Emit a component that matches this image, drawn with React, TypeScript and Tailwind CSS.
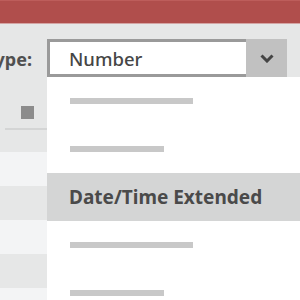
const font = { fontFamily: '"Noto Sans", "Open Sans", sans-serif' };

const rows = ["bg-[#f3f4f5]", "bg-[#e6e7e7]", "bg-[#f3f4f5]", "bg-[#e6e7e7]", "bg-[#f3f4f5]"];

const App = () => {
  return (
    <div className="w-[300px] h-[300px] overflow-hidden bg-[#e6e7e7] flex flex-col" style={font}>
      <div className="h-[24px] shrink-0 bg-[#b04e4c] border-t border-t-[#bd5d5b] border-b border-b-[#d4a5a4]" />
      <div className="flex flex-1">
        {/* left column: label + grid rows behind the popup */}
        <div className="w-[47px] shrink-0 flex flex-col">
          <div className="mt-[15px] h-[38px] flex items-center justify-end pr-[15px]">
            <span className="whitespace-nowrap text-[18px] font-bold text-[#505050] leading-none pt-[2px]">Type:</span>
          </div>
          <div className="mt-[29px] ml-[21px] w-[13px] h-[13px] bg-[#8c8c8c]" />
          <div className="mt-[9px] ml-[5px] h-[2px] bg-[#d4d5d5]" />
          <div className="h-[22px]" />
          {rows.map((c, i) => (
            <div key={i} className={`h-[34px] shrink-0 ${c}`} />
          ))}
        </div>
        {/* right column: select + open list */}
        <div className="flex-1 flex flex-col">
          <div className="mt-[15px] h-[38px] flex pr-[13px]">
            <div className="flex-1 bg-white border-[3px] border-r-0 border-[#9a9a9a] flex items-center pl-[19px]">
              <span className="text-[18.5px] font-medium text-[#464646] leading-none pt-[2px]">Number</span>
            </div>
            <div className="w-[41px] bg-[#c1c1c1] flex items-center justify-center">
              <svg width="14" height="9" viewBox="0 0 14 9" className="mt-[1px]">
                <polyline points="1.5,1.5 7,7 12.5,1.5" fill="none" stroke="#444444" strokeWidth="3" />
              </svg>
            </div>
          </div>
          <div className="flex-1 bg-white flex flex-col">
            <div className="h-[48px] flex items-center pl-[23px]">
              <div className="w-[123px] h-[6px] bg-[#c8c8c8]" />
            </div>
            <div className="h-[48px] flex items-center pl-[23px]">
              <div className="w-[94px] h-[6px] bg-[#c8c8c8]" />
            </div>
            <div className="h-[48px] flex items-center pl-[22px] bg-[#d4d5d5]">
              <span className="text-[19px] font-bold text-[#4a4a4a] whitespace-nowrap">Date/Time Extended</span>
            </div>
            <div className="h-[48px] flex items-center pl-[23px]">
              <div className="w-[123px] h-[6px] bg-[#c8c8c8]" />
            </div>
            <div className="h-[48px] flex items-center pl-[23px]">
              <div className="w-[94px] h-[6px] bg-[#c8c8c8]" />
            </div>
          </div>
        </div>
      </div>
    </div>
  );
};

export default App;
